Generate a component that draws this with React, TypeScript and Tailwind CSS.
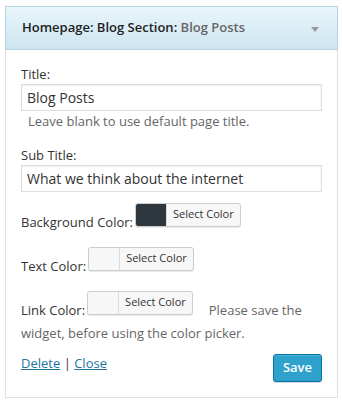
const FONT = { fontFamily: '"Open Sans", "Noto Sans", sans-serif' };

function ColorRow({ label, swatch, note }: { label: string; swatch: string; note?: string }) {
    return (
        <div className="flex items-end">
            <span className="text-[13px] leading-[17px] text-[#333] mb-[-4px]">{label}</span>
            <div className="ml-[2px] flex h-[24px] rounded-[3px] border border-[#ccc] bg-[#f7f7f7] shadow-[0_1px_0_rgba(0,0,0,0.08)] overflow-hidden">
                <span className={`w-[31px] border-r border-[#ddd] ${swatch}`} />
                <span className="px-[6px] text-[11px] leading-[20px] text-[#333]">Select Color</span>
            </div>
            {note && <span className="ml-[16px] text-[13px] leading-[17px] text-[#666] mb-[-4px]">{note}</span>}
        </div>
    );
}

export default function App() {
    return (
        <div className="pt-[6px] pl-[5px] bg-white w-[342px] h-[404px]" style={FONT}>
            <div className="w-[333px]">
                {/* header */}
                <div className="flex items-center justify-between h-[44px] px-[16px] border border-[#b2d3df] bg-gradient-to-b from-[#e9f6fc] to-[#cde5ef]">
                    <div className="text-[13px] font-semibold text-[#222]">
                        Homepage: Blog Section: <span className="text-[#666]">Blog Posts</span>
                    </div>
                    <svg width="8" height="5" viewBox="0 0 8 5" className="mr-[2px] mt-[2px]">
                        <path d="M0 0 H8 L4 5 Z" fill="#999" />
                    </svg>
                </div>

                {/* body */}
                <div className="border-x border-b border-[#dfdfdf] h-[348px] px-[15px] pt-[15px]">
                    <div className="text-[13px] leading-[18px] text-[#333]">Title:</div>
                    <div className="mt-[1px] h-[27px] border border-[#ddd] px-[5px] text-[14px] leading-[25px] text-[#333] shadow-[inset_0_1px_2px_rgba(0,0,0,0.07)]">Blog Posts</div>
                    <div className="mt-[1px] pl-[7px] text-[13px] leading-[18px] text-[#666]">Leave blank to use default page title.</div>

                    <div className="mt-[16px] text-[13px] leading-[18px] text-[#333]">Sub Title:</div>
                    <div className="mt-[1px] h-[27px] border border-[#ddd] px-[5px] text-[14px] leading-[25px] text-[#333] shadow-[inset_0_1px_2px_rgba(0,0,0,0.07)]">What we think about the internet</div>

                    <div className="mt-[11px] flex flex-col gap-[20px]">
                        <ColorRow label="Background Color:" swatch="bg-[#2e373d]" />
                        <ColorRow label="Text Color:" swatch="bg-[#f7f7f7]" />
                        <ColorRow label="Link Color:" swatch="bg-[#f7f7f7]" note="Please save the" />
                    </div>
                    <div className="mt-[9px] text-[13px] leading-[18px] text-[#666]">widget, before using the color picker.</div>

                    <div className="mt-[12px] flex items-start justify-between">
                        <div className="text-[13px] leading-[18px] text-[#333]">
                            <a className="text-[#21759b] underline">Delete</a> | <a className="text-[#21759b] underline">Close</a>
                        </div>
                        <button className="h-[28px] px-[9px] rounded-[3px] border border-[#0074a2] bg-[#2ea2cc] text-[13px] font-semibold text-white shadow-[inset_0_1px_0_rgba(120,200,230,0.5),0_1px_0_rgba(0,0,0,0.15)]">
                            Save
                        </button>
                    </div>
                </div>
            </div>
        </div>
    );
}
